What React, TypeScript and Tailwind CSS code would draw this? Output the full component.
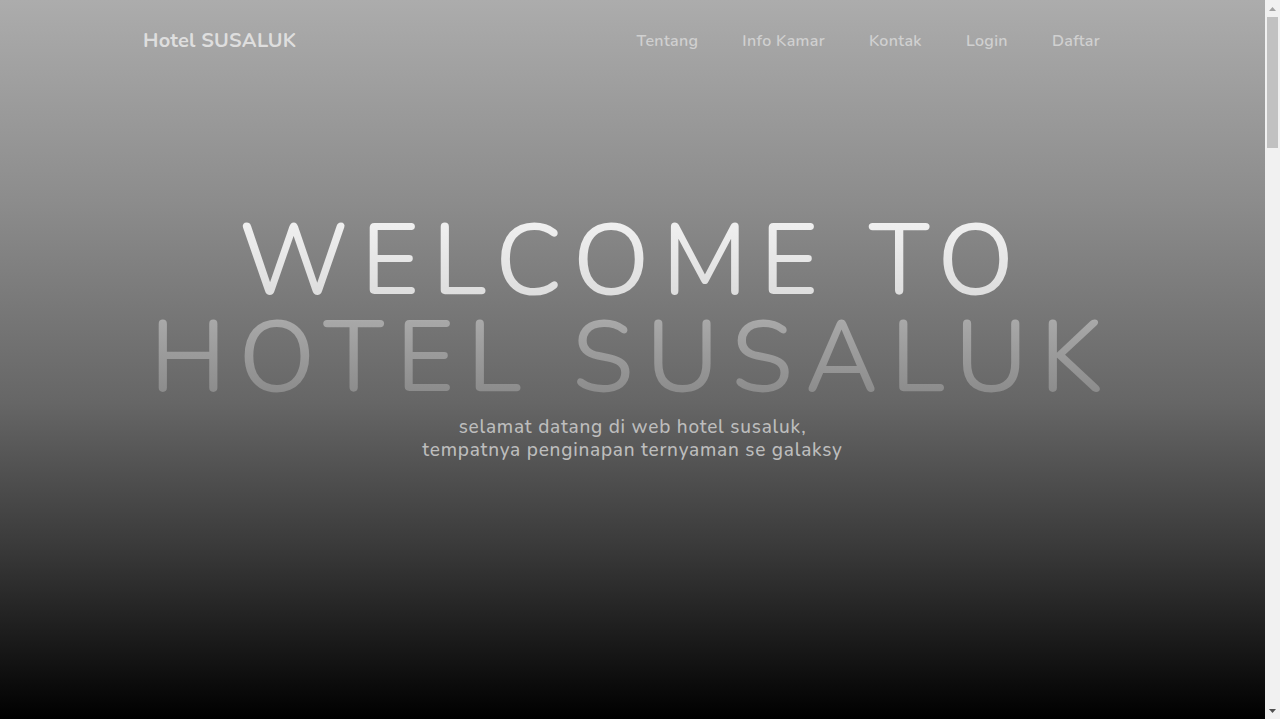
const links = ["Tentang", "Info Kamar", "Kontak", "Login", "Daftar"];

const sections = [
  { id: "tentang", title: "Tentang" },
  { id: "info-kamar", title: "Info Kamar" },
  { id: "kontak", title: "Kontak" },
];

// classic browser scrollbar, sits on top of the page edge
const FakeScrollbar = () => (
  <div className="fixed right-0 top-0 flex h-screen w-[15px] flex-col items-center bg-[#f1f1f1]">
    <div className="flex h-[17px] w-full items-center justify-center">
      <svg width="7" height="4" viewBox="0 0 7 4">
        <path d="M3.5 0 L7 4 L0 4 Z" fill="#a3a3a3" />
      </svg>
    </div>
    <div className="h-[131px] w-[11px] bg-[#c1c1c1]" />
    <div className="flex-1" />
    <div className="flex h-[17px] w-full items-center justify-center">
      <svg width="7" height="4" viewBox="0 0 7 4">
        <path d="M0 0 L7 0 L3.5 4 Z" fill="#505050" />
      </svg>
    </div>
  </div>
);

export default function App() {
  return (
    <div className="pr-[15px] font-['Nunito','Lato','Liberation_Sans',sans-serif]">
      <section className="flex h-[719px] flex-col bg-[linear-gradient(to_bottom,#acacac_0%,#8c8c8c_28%,#666_56%,#3a3a3a_76%,#000_100%)]">
        <nav className="flex items-center justify-between px-[143px] pt-[28px]">
          <a href="#" className="text-[20px] font-bold leading-[26px] tracking-[0.01em] text-[#dedede]">
            Hotel SUSALUK
          </a>
          <ul className="flex">
            {links.map((l) => (
              <li key={l}>
                <a
                  href={`#${l}`}
                  className="block px-[22px] text-[16px] font-semibold leading-[26px] tracking-[0.02em] text-[#d0d0d0]"
                >
                  {l}
                </a>
              </li>
            ))}
          </ul>
        </nav>

        <div className="mt-[159px] flex flex-col items-center text-center">
          <h1 className="bg-[linear-gradient(to_bottom,#f2f2f2_0%,#dcdcdc_45%,#a8a8a8_56%,#868686_100%)] bg-clip-text text-[100px] font-normal uppercase leading-[97px] tracking-[0.125em] text-transparent">
            Welcome to
            <br />
            Hotel Susaluk
          </h1>
          <p className="mt-[9px] text-[19px] font-medium leading-[23px] tracking-[0.04em] text-[#bdbdbd]">
            selamat datang di web hotel susaluk,
            <br />
            tempatnya penginapan ternyaman se galaksy
          </p>
        </div>
      </section>

      {sections.map((s) => (
        <section key={s.id} id={s.id} className="h-[1024px] bg-black px-[143px] py-20">
          <h2 className="text-3xl font-semibold text-[#cfcfcf]">{s.title}</h2>
        </section>
      ))}

      <FakeScrollbar />
    </div>
  );
}
